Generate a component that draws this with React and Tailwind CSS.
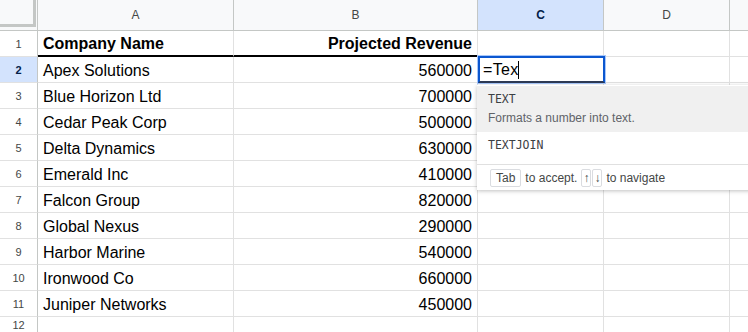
import React from "react";

const rows = [
  ["Apex Solutions", "560000"],
  ["Blue Horizon Ltd", "700000"],
  ["Cedar Peak Corp", "500000"],
  ["Delta Dynamics", "630000"],
  ["Emerald Inc", "410000"],
  ["Falcon Group", "820000"],
  ["Global Nexus", "290000"],
  ["Harbor Marine", "540000"],
  ["Ironwood Co", "660000"],
  ["Juniper Networks", "450000"],
];

const cell = "border-r border-b border-[#e1e1e1] flex items-center px-[5px] pt-[2px] text-[16px] text-[#000] whitespace-nowrap overflow-hidden";
const rowHead = "border-r border-r-[#c4c7c5] border-b border-b-[#e1e1e1] flex items-center justify-center pt-[2px] text-[11px] text-[#444746]";
const colHead = "border-r border-b border-[#c4c7c5] bg-[#f8f9fa] flex items-center justify-center text-[12px] text-[#444746]";

function Key({ children, className = "" }) {
  return (
    <span className={`inline-flex items-center h-[18px] border border-[#dadce0] rounded-[2px] bg-white text-[#444746] ${className}`}>
      {children}
    </span>
  );
}

export default function App() {
  return (
    <div className="relative w-[748px] h-[332px] overflow-hidden bg-white font-['Liberation_Sans',Arial,sans-serif]">
      <div className="grid grid-cols-[38px_196px_244px_126px_126px_60px] grid-rows-[31px_repeat(12,26px)]">
        {/* header row */}
        <div className="border-r border-b border-[#c4c7c5] bg-[#f8f9fa]">
          <div className="w-[36px] h-[27px] border-r-[3px] border-b-[3px] border-[#c4c7c5] bg-[#f8f9fa]" />
        </div>
        <div className={colHead}>A</div>
        <div className={colHead}>B</div>
        <div className="border-r border-b border-[#c4c7c5] bg-[#d3e3fd] flex items-center justify-center text-[12px] font-bold text-[#041e49]">C</div>
        <div className={colHead}>D</div>
        <div className={colHead} />

        {/* row 1 */}
        <div className={rowHead}>1</div>
        <div className={`${cell} font-bold border-b-2 border-b-black`}>Company Name</div>
        <div className={`${cell} font-bold justify-end border-b-2 border-b-black`}>Projected Revenue</div>
        <div className={cell} />
        <div className={cell} />
        <div className={cell} />

        {rows.map(([name, rev], i) => (
          <React.Fragment key={name}>
            <div
              className={
                i === 0
                  ? "border-r border-r-[#c4c7c5] border-b border-b-[#e1e1e1] bg-[#d3e3fd] flex items-center justify-center pt-[2px] text-[11px] font-bold text-[#041e49]"
                  : rowHead
              }
            >
              {i + 2}
            </div>
            <div className={cell}>{name}</div>
            <div className={`${cell} justify-end`}>{rev}</div>
            <div className={cell} />
            <div className={cell} />
            <div className={cell} />
          </React.Fragment>
        ))}

        {/* row 12, cut by the window */}
        <div className="border-r border-r-[#c4c7c5] flex items-start justify-center pt-[1px] leading-[14px] text-[11px] text-[#444746]">12</div>
        <div className={cell} />
        <div className={cell} />
        <div className={cell} />
        <div className={cell} />
        <div className={cell} />
      </div>

      {/* active cell editor */}
      <div className="absolute left-[478px] top-[56px] w-[127px] h-[27px] border-2 border-[#0b57d0] border-b-[#2d3a55] bg-white shadow-[0_0_0_1px_#a8c7fa] flex items-center pl-[3px] pt-[1px] text-[16px] text-black">
        <span className="tracking-[0.3px]">=Tex</span>
        <span className="w-px h-[18px] bg-black" />
      </div>

      {/* autocomplete */}
      <div className="absolute left-[477px] top-[85px] w-[290px] bg-white shadow-[0_1px_4px_rgba(0,0,0,0.25)]">
        <div className="bg-[#f0f0f0] pl-[11px] pt-[6px] pb-[6px] mt-px">
          <div className="h-[14px] leading-[14px] text-[11.5px] text-[#3c4043] font-['DejaVu_Sans_Mono',monospace]">TEXT</div>
          <div className="mt-[4px] h-[16px] leading-[16px] text-[12px] text-[#5f6368]">Formats a number into text.</div>
        </div>
        <div className="h-[32px] pl-[11px] pt-[6px]">
          <div className="h-[14px] leading-[14px] text-[11.5px] text-[#3c4043] font-['DejaVu_Sans_Mono',monospace]">TEXTJOIN</div>
        </div>
        <div className="h-[26px] border-t border-[#e0e0e0] flex items-center pl-[13px] text-[12px] text-[#444746]">
          <Key className="px-[5px]">Tab</Key>
          <span className="ml-[4px]">to accept.</span>
          <Key className="ml-[4px] w-[10px] justify-center">↑</Key>
          <Key className="ml-px w-[10px] justify-center">↓</Key>
          <span className="ml-[4px]">to navigate</span>
        </div>
      </div>
    </div>
  );
}
